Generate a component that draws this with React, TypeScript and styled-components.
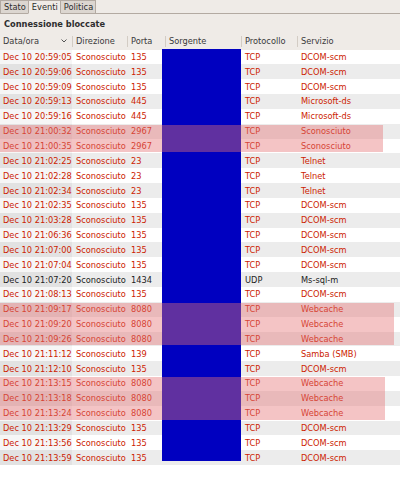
import React from "react";
import styled, { createGlobalStyle } from "styled-components";

const Global = createGlobalStyle`
  html, body { margin: 0; padding: 0; background: #ffffff; }
  body { font-family: "DejaVu Sans", "Liberation Sans", sans-serif; }
`;

const ROW_H = 14.85;

type Row = { t: string; port: string; proto: string; svc: string; black?: boolean };

const rows: Row[] = [
  { t: "20:59:05", port: "135", proto: "TCP", svc: "DCOM-scm" },
  { t: "20:59:06", port: "135", proto: "TCP", svc: "DCOM-scm" },
  { t: "20:59:09", port: "135", proto: "TCP", svc: "DCOM-scm" },
  { t: "20:59:13", port: "445", proto: "TCP", svc: "Microsoft-ds" },
  { t: "20:59:16", port: "445", proto: "TCP", svc: "Microsoft-ds" },
  { t: "21:00:32", port: "2967", proto: "TCP", svc: "Sconosciuto" },
  { t: "21:00:35", port: "2967", proto: "TCP", svc: "Sconosciuto" },
  { t: "21:02:25", port: "23", proto: "TCP", svc: "Telnet" },
  { t: "21:02:28", port: "23", proto: "TCP", svc: "Telnet" },
  { t: "21:02:34", port: "23", proto: "TCP", svc: "Telnet" },
  { t: "21:02:35", port: "135", proto: "TCP", svc: "DCOM-scm" },
  { t: "21:03:28", port: "135", proto: "TCP", svc: "DCOM-scm" },
  { t: "21:06:36", port: "135", proto: "TCP", svc: "DCOM-scm" },
  { t: "21:07:00", port: "135", proto: "TCP", svc: "DCOM-scm" },
  { t: "21:07:04", port: "135", proto: "TCP", svc: "DCOM-scm" },
  { t: "21:07:20", port: "1434", proto: "UDP", svc: "Ms-sql-m", black: true },
  { t: "21:08:13", port: "135", proto: "TCP", svc: "DCOM-scm" },
  { t: "21:09:17", port: "8080", proto: "TCP", svc: "Webcache" },
  { t: "21:09:20", port: "8080", proto: "TCP", svc: "Webcache" },
  { t: "21:09:26", port: "8080", proto: "TCP", svc: "Webcache" },
  { t: "21:11:12", port: "139", proto: "TCP", svc: "Samba (SMB)" },
  { t: "21:12:10", port: "135", proto: "TCP", svc: "DCOM-scm" },
  { t: "21:13:15", port: "8080", proto: "TCP", svc: "Webcache" },
  { t: "21:13:18", port: "8080", proto: "TCP", svc: "Webcache" },
  { t: "21:13:24", port: "8080", proto: "TCP", svc: "Webcache" },
  { t: "21:13:29", port: "135", proto: "TCP", svc: "DCOM-scm" },
  { t: "21:13:56", port: "135", proto: "TCP", svc: "DCOM-scm" },
  { t: "21:13:59", port: "135", proto: "TCP", svc: "DCOM-scm" },
];

const marks = [
  { start: 6, count: 2, width: 383 },
  { start: 18, count: 3, width: 394 },
  { start: 23, count: 3, width: 385 },
];

const Window = styled.div`
  width: 400px;
  height: 502px;
  background: #ffffff;
  font-size: 8.25px;
  color: #2e2e2e;
  overflow: hidden;
`;

const TabBar = styled.div`
  display: flex;
  align-items: flex-end;
  height: 14px;
  background: #efebe7;
  border-bottom: 1px solid #b3aaa2;
  box-sizing: border-box;
`;

const Tab = styled.div<{ $active?: boolean }>`
  height: ${(p) => (p.$active ? "14px" : "13px")};
  padding: 0 2px 0 3px;
  display: flex;
  align-items: center;
  box-sizing: border-box;
  border: 1px solid #b3aaa2;
  border-bottom: ${(p) => (p.$active ? "1px solid #efebe7" : "none")};
  margin-right: -1px;
  margin-bottom: ${(p) => (p.$active ? "-1px" : "0")};
  background: ${(p) => (p.$active ? "#efebe7" : "#dcd6d0")};
  color: #2e2e2e;
  position: relative;
  z-index: ${(p) => (p.$active ? 1 : 0)};
`;

const Panel = styled.div`
  background: #efebe7;
`;

const Title = styled.div`
  height: 19px;
  display: flex;
  align-items: center;
  padding-left: 4px;
  font-weight: bold;
  color: #2e2e2e;
`;

const cols = "72px 55px 38px 76px 56px 1fr";

const Header = styled.div`
  display: grid;
  grid-template-columns: ${cols};
  height: 16.5px;
  background: #efebe7;
`;

const HeadCell = styled.div<{ $first?: boolean }>`
  display: flex;
  align-items: center;
  justify-content: space-between;
  padding-left: ${(p) => (p.$first ? "3px" : "4px")};
  padding-right: 5px;
  color: #3a3a3a;
  position: relative;
  &::before {
    content: "";
    display: ${(p) => (p.$first ? "none" : "block")};
    position: absolute;
    left: 0;
    top: 3px;
    bottom: 3px;
    width: 1px;
    background: #d3ccc4;
  }
`;

const Body = styled.div`
  position: relative;
`;

const RowLine = styled.div<{ $even: boolean; $black?: boolean }>`
  display: grid;
  grid-template-columns: ${cols};
  height: ${ROW_H}px;
  align-items: center;
  background: ${(p) => (p.$even ? "#ececec" : "#ffffff")};
  color: ${(p) => (p.$black ? "#1c1c1c" : "#cc2200")};
`;

const Cell = styled.div<{ $sorted?: boolean; $even?: boolean }>`
  height: 100%;
  display: flex;
  align-items: center;
  padding-left: 4px;
  white-space: nowrap;
  overflow: hidden;
  background: ${(p) => (p.$sorted ? (p.$even ? "#e2e2e2" : "#f6f6f6") : "transparent")};
  ${(p) => (p.$sorted ? "padding-left: 3px;" : "")}
`;

const Redact = styled.div`
  position: absolute;
  left: 162px;
  width: 79px;
  top: -0.5px;
  height: 412px;
  background: #0000c0;
`;

const Highlight = styled.div<{ $top: number; $height: number; $width: number }>`
  position: absolute;
  left: 0;
  top: ${(p) => p.$top}px;
  height: ${(p) => p.$height}px;
  width: ${(p) => p.$width}px;
  background: rgba(228, 114, 116, 0.42);
`;

const SortArrow = () => (
  <svg width="6" height="4" viewBox="0 0 6 4">
    <path d="M0.5 0.5 L3 3 L5.5 0.5" fill="none" stroke="#555" strokeWidth="1" />
  </svg>
);

export default function App() {
  return (
    <Window>
      <Global />
      <TabBar>
        <Tab>Stato</Tab>
        <Tab $active>Eventi</Tab>
        <Tab>Politica</Tab>
      </TabBar>
      <Panel>
        <Title>Connessione bloccate</Title>
        <Header>
          <HeadCell $first>
            Data/ora
            <SortArrow />
          </HeadCell>
          <HeadCell>Direzione</HeadCell>
          <HeadCell>Porta</HeadCell>
          <HeadCell>Sorgente</HeadCell>
          <HeadCell>Protocollo</HeadCell>
          <HeadCell>Servizio</HeadCell>
        </Header>
      </Panel>
      <Body>
        {rows.map((r, i) => {
          const even = i % 2 === 1;
          return (
            <RowLine key={r.t} $even={even} $black={r.black}>
              <Cell $sorted $even={even}>Dec 10 {r.t}</Cell>
              <Cell>Sconosciuto</Cell>
              <Cell>{r.port}</Cell>
              <Cell />
              <Cell>{r.proto}</Cell>
              <Cell>{r.svc}</Cell>
            </RowLine>
          );
        })}
        <Redact />
        {marks.map((m) => (
          <Highlight
            key={m.start}
            $top={(m.start - 1) * ROW_H + 1}
            $height={m.count * ROW_H - 2}
            $width={m.width}
          />
        ))}
      </Body>
    </Window>
  );
}
